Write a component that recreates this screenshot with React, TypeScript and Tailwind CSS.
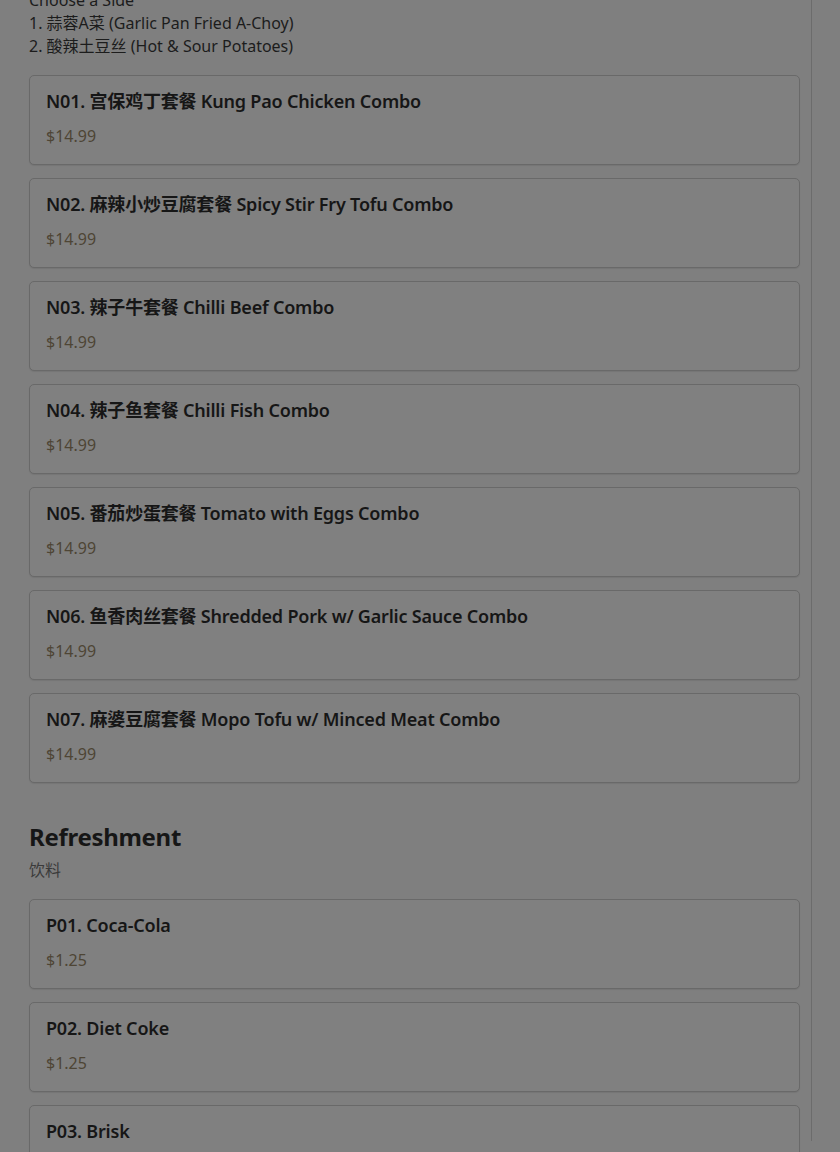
import React from 'react'

const font = { fontFamily: '"Noto Sans", "Noto Sans CJK SC", sans-serif' }

type Item = { code: string; zh: string; en: string; price: string }

const combos: Item[] = [
  { code: 'N01', zh: '宫保鸡丁套餐', en: 'Kung Pao Chicken Combo', price: '$14.99' },
  { code: 'N02', zh: '麻辣小炒豆腐套餐', en: 'Spicy Stir Fry Tofu Combo', price: '$14.99' },
  { code: 'N03', zh: '辣子牛套餐', en: 'Chilli Beef Combo', price: '$14.99' },
  { code: 'N04', zh: '辣子鱼套餐', en: 'Chilli Fish Combo', price: '$14.99' },
  { code: 'N05', zh: '番茄炒蛋套餐', en: 'Tomato with Eggs Combo', price: '$14.99' },
  { code: 'N06', zh: '鱼香肉丝套餐', en: 'Shredded Pork w/ Garlic Sauce Combo', price: '$14.99' },
  { code: 'N07', zh: '麻婆豆腐套餐', en: 'Mopo Tofu w/ Minced Meat Combo', price: '$14.99' },
]

const drinks: Item[] = [
  { code: 'P01', zh: '', en: 'Coca-Cola', price: '$1.25' },
  { code: 'P02', zh: '', en: 'Diet Coke', price: '$1.25' },
  { code: 'P03', zh: '', en: 'Brisk', price: '$1.25' },
]

const MenuCard = ({ item }: { item: Item }) => (
  <div className="rounded-[5px] border border-[#696969] bg-[#808080] px-4 pt-[14px] pb-[16px] shadow-[0_1px_1px_rgba(0,0,0,0.08)]">
    <h3 className="h-[22px] text-[18px] leading-[22px] font-semibold tracking-[-0.2px] text-[#161616] whitespace-nowrap">
      {item.code}. {item.zh ? `${item.zh} ` : ''}{item.en}
    </h3>
    <p className="mt-[12px] h-[24px] text-[16px] leading-[24px] text-[#4e4535]">{item.price}</p>
  </div>
)

export default function App() {
  return (
    <div style={font} className="h-[1152px] w-[840px] overflow-hidden bg-[#7f7f7f]">
      <div className="w-[812px] h-[1152px] border-r border-[#6c6c6c] pl-[29px] pr-[11px]">
        <div className="-mt-[11px] text-[16px] leading-[23px] text-[#1c1c1c]">
          <p className="h-[23px]">Choose a Side</p>
          <p className="h-[23px]">1. 蒜蓉A菜 (Garlic Pan Fried A-Choy)</p>
          <p className="h-[23px]">2. 酸辣土豆丝 (Hot &amp; Sour Potatoes)</p>
        </div>

        <div className="mt-[17px] flex flex-col gap-[13px]">
          {combos.map((c) => (
            <MenuCard key={c.code} item={c} />
          ))}
        </div>

        <h2 className="mt-[39px] h-[29px] text-[24px] leading-[29px] font-bold tracking-[-0.3px] text-[#161616]">Refreshment</h2>
        <p className="mt-[7px] h-[24px] text-[16px] leading-[24px] text-[#3a3a3a]">饮料</p>

        <div className="mt-[17px] flex flex-col gap-[13px] pb-10">
          {drinks.map((c) => (
            <MenuCard key={c.code} item={c} />
          ))}
        </div>
      </div>
    </div>
  )
}
